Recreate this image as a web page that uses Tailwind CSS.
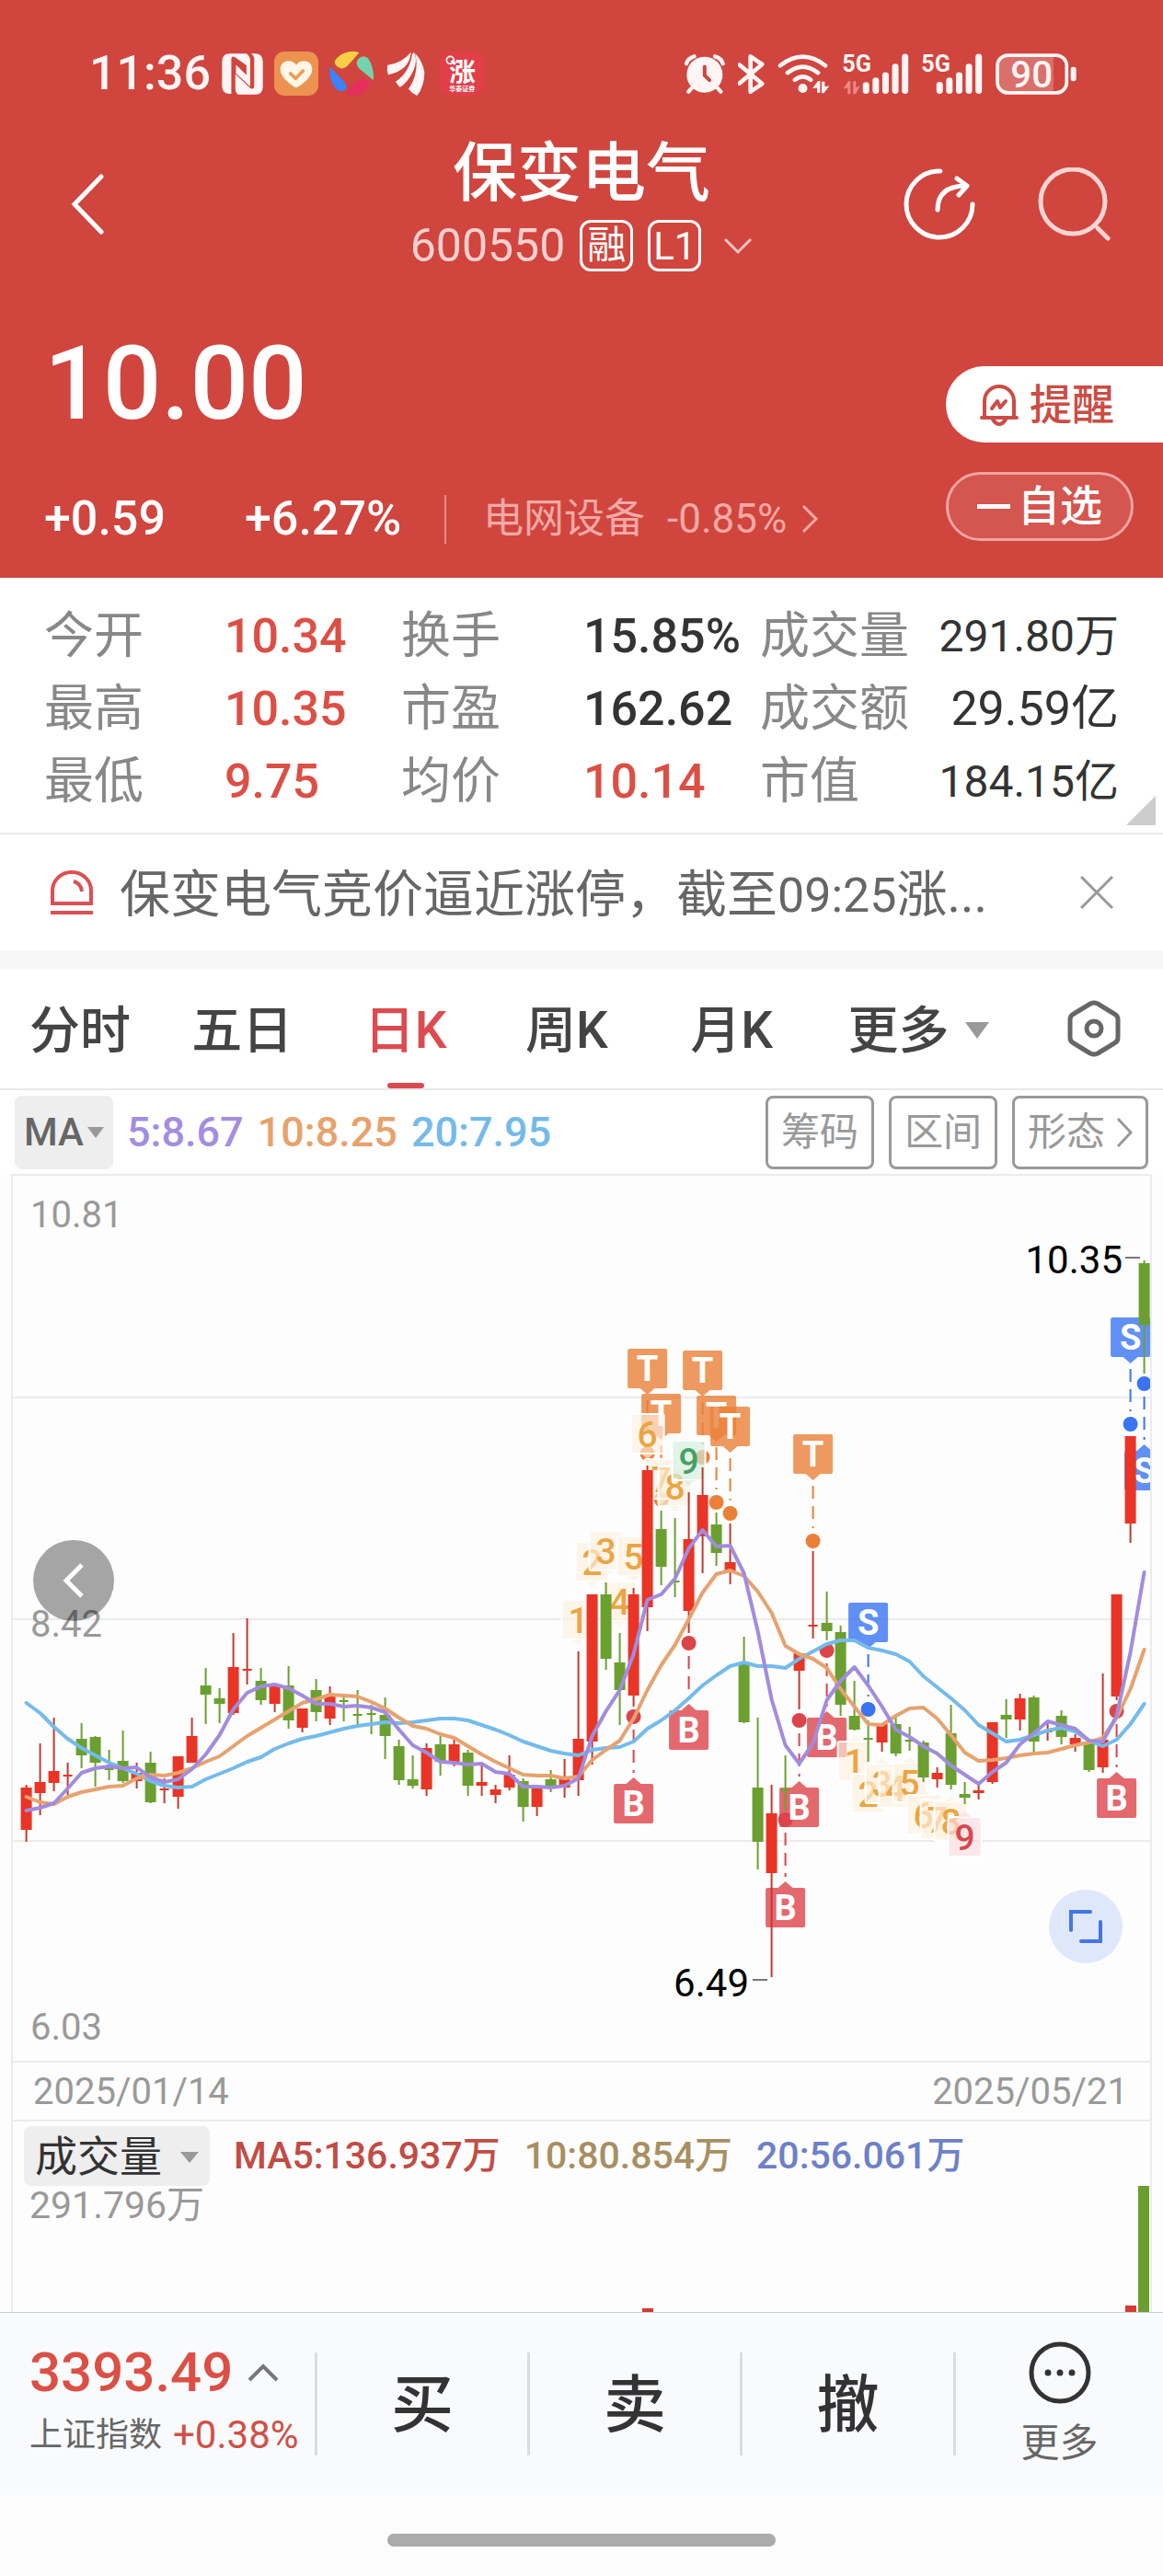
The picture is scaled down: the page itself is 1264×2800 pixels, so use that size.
<!DOCTYPE html>
<html lang="zh-CN">
<head>
    <meta charset="UTF-8">
    <meta name="viewport" content="width=device-width, initial-scale=1">
    <title>保变电气 600550</title>
    <script src="https://cdn.jsdelivr.net/npm/@tailwindcss/browser@4"></script>
</head>
<body class="bg-[#fcfcfc] text-[#333] font-['Roboto','Noto_Sans_CJK_SC',sans-serif]">

    <header class="bg-[#d0453e] text-white">
        <!-- status bar -->
        <div class="flex items-center justify-between pt-14 pl-[97px] pr-[94px] text-[#fff5f4]">
            <div class="flex items-center gap-3 h-12">
                <span class="text-[52px] leading-12 font-medium">11:36</span>
                <svg class="w-[45px] h-[45px]" viewBox="455 53 134 134">
                    <path fill="currentColor" d="M480 54h55q8 4 12 18v88l-46-42v-28l34 33V92L498 66q-12-8-12 8v110h-5q-25 0-25-26V80q0-26 24-26z"/>
                    <path fill="currentColor" d="M549 54h14q25 0 25 26v80q0 26-25 26h-55q-8-4-9-18v-48l49 46q10 6 12-6V70q-2-12-11-16z"/>
                </svg>
                <svg class="w-12 h-12" viewBox="0 0 144 144">
                    <rect width="144" height="144" rx="34" fill="#ec9350"/>
                    <path fill="#fff6e6" d="M72 44c14-22 52-16 52 14 0 26-32 48-45 57q-7 5-14 0C52 106 20 84 20 58c0-30 38-36 52-14z"/>
                    <path d="M53 72l17 16 24-25" fill="none" stroke="#ec9f58" stroke-width="11" stroke-linecap="round" stroke-linejoin="round"/>
                </svg>
                <svg class="w-12 h-12" viewBox="0 0 144 144">
                    <path fill="#fbcf45" d="M58 2Q80-4 97 4L58 48q-14 12-28 4-16-10-12-22Q32 8 58 2z"/>
                    <path fill="#73d3ad" d="M94 24q16-16 32-2 20 30 18 72L98 56q-16-16-4-32z"/>
                    <path fill="#3b82fb" d="M3 50l50 54q8 16-6 24-12 4-22-2Q-6 92 3 50z"/>
                    <path fill="#e62f5c" d="M54 140l34-44q12-12 30-6 16 8 12 22-26 40-76 28z"/>
                </svg>
                <svg class="w-12 h-12" viewBox="0 0 144 144" fill="currentColor">
                    <path d="M10 44q46-6 76-42-4 58-74 74-6-18-2-32zM36 98q46-32 54-90l6-6q16 34-12 78-16 26-34 36-8-8-14-18zM78 122q36-52 22-116 24 26 30 62 0 44-24 76-18-8-28-22z"/>
                </svg>
                <svg class="w-12 h-12 overflow-visible" viewBox="0 0 144 144">
                    <rect width="144" height="144" rx="34" fill="#e13f48"/>
                    <circle cx="34" cy="28" r="12" fill="none" stroke="#fff" stroke-width="5"/>
                    <text x="74" y="98" font-size="86" font-weight="700" text-anchor="middle" fill="#fff">涨</text>
                    <text x="73" y="130" font-size="21" font-weight="700" text-anchor="middle" fill="#fff">华泰证券</text>
                </svg>
            </div>
            <div class="flex items-center gap-[14px] h-12">
                <svg class="w-11 h-[43px]" viewBox="38 55 131 130">
                    <circle cx="103" cy="122" r="59" fill="currentColor"/>
                    <path d="M64 162l-14 16M142 162l14 16M43 86q4-18 26-24M163 86q-4-18-26-24" fill="none" stroke="currentColor" stroke-width="13" stroke-linecap="round"/>
                    <path d="M103 96v28l16 16" fill="none" stroke="#d0453e" stroke-width="12" stroke-linecap="round"/>
                </svg>
                <svg class="w-[29px] h-[43px]" viewBox="217 55 87 130">
                    <path d="M222 90l74 62-38 26V62l38 26-74 62" fill="none" stroke="currentColor" stroke-width="14" stroke-linejoin="round" stroke-linecap="round"/>
                </svg>
                <svg class="w-[57px] h-11" viewBox="350 50 170 133">
                    <path d="M358 90q74-58 148 0M382 114q50-40 100 0M406 137q26-20 52 0" fill="none" stroke="currentColor" stroke-width="14" stroke-linecap="round"/>
                    <circle cx="432" cy="165" r="15" fill="currentColor"/>
                    <path d="M464 165l18-24h7v38h-10v-16zM519 157l-18 24h-7v-38h10v16z" fill="currentColor"/>
                </svg>
                <svg class="w-[72px] h-[45px] overflow-visible" viewBox="553 50 217 135">
                    <text x="551" y="110" font-size="76" font-weight="700" fill="currentColor">5G</text>
                    <path d="M555 165l16-24h7v42h-9v-20zM610 157l-16 26h-7v-42h9v20z" fill="#e88a85"/>
                    <path d="M629 154v18M661 139v33M693 122v50M725 94v78M757 62v110" stroke="currentColor" stroke-width="21" stroke-linecap="round"/>
                </svg>
                <svg class="w-[66px] h-[45px] overflow-visible" viewBox="808 50 199 135">
                    <text x="806" y="110" font-size="76" font-weight="700" fill="currentColor">5G</text>
                    <path d="M866 154v18M898 139v33M930 122v50M962 94v78M994 62v110" stroke="currentColor" stroke-width="21" stroke-linecap="round"/>
                </svg>
                <svg class="w-[88px] h-[45px] overflow-visible" viewBox="1058 48 263 134">
                    <path d="M1090 56h156v120h-156q-24 0-24-26V82q0-26 24-26z" fill="#da706b"/>
                    <rect x="1064" y="54" width="225" height="122" rx="34" fill="none" stroke="currentColor" stroke-width="11"/>
                    <rect x="1302" y="92" width="18" height="46" rx="7" fill="currentColor"/>
                    <text x="1175" y="159" font-size="120" font-weight="500" text-anchor="middle" fill="currentColor">90</text>
                </svg>
            </div>
        </div>

        <!-- title -->
        <div class="grid grid-cols-[1fr_auto_1fr] items-center pt-[45px] px-14">
            <button aria-label="返回" class="justify-self-start pl-5">
                <svg class="w-10 h-[66px]" viewBox="0 0 40 66"><path d="M34 3L5 33l29 30" fill="none" stroke="#fff" stroke-width="5" stroke-linecap="round"/></svg>
            </button>
            <div>
                <h1 class="text-[70px] leading-[80px] font-medium text-center">保变电气</h1>
                <div class="flex items-center justify-center gap-4 mt-[10px] h-14">
                    <span class="text-[50px] leading-14 text-[#fbd0cf]">600550</span>
                    <span class="h-14 w-[58px] border-[3px] rounded-xl text-[42px] leading-[50px] text-center">融</span>
                    <span class="h-14 w-[58px] border-[3px] rounded-xl text-[42px] leading-[52px] text-center">L1</span>
                    <svg class="w-8 h-5 ml-2" viewBox="0 0 32 20"><path d="M2 3l14 14L30 3" fill="none" stroke="#f6c2bf" stroke-width="3"/></svg>
                </div>
            </div>
            <div class="flex items-center gap-[66px] justify-self-end">
                <button aria-label="分享">
                    <svg class="w-20 h-20" viewBox="0 0 80 80" fill="none" stroke="#fff" stroke-width="5" stroke-linecap="round" stroke-linejoin="round">
                        <path d="M40 4a36 36 0 1 0 35 36M37 46q0-26 31-26M58 12l11 8-9 10"/>
                    </svg>
                </button>
                <button aria-label="搜索">
                    <svg class="w-20 h-20" viewBox="0 0 80 80" fill="none" stroke="#ffd4d2" stroke-width="5" stroke-linecap="round">
                        <circle cx="38" cy="37" r="35"/><path d="M65 66l11 11"/>
                    </svg>
                </button>
            </div>
        </div>

        <!-- price -->
        <div class="flex justify-between items-start pt-[74px] pb-[33px]">
            <div>
                <div class="pl-12 text-[112px] leading-24 font-medium">10.00</div>
                <div class="flex items-center h-16 mt-[66px] pt-[2px] pl-12">
                    <span class="w-[218px] text-[52px] font-medium">+0.59</span>
                    <span class="w-[217px] text-[52px] font-medium">+6.27%</span>
                    <span class="w-[2px] h-[53px] bg-[#e48d88]"></span>
                    <a href="#" class="flex items-center ml-10 text-[44px] text-[#f3a9a5]">
                        <span>电网设备</span>
                        <span class="ml-6">-0.85%</span>
                        <svg class="w-5 h-8 ml-4" viewBox="0 0 20 32"><path d="M2 2l14 14L2 30" fill="none" stroke="currentColor" stroke-width="3"/></svg>
                    </a>
                </div>
            </div>
            <div class="flex flex-col gap-8 pt-[29px]">
                <button class="flex items-center h-[83px] pt-[2px] pl-[37px] bg-white text-[#cb4d45] rounded-l-full text-[46px] font-medium">
                    <svg class="w-[42px] h-[46px] mr-3" viewBox="0 0 42 46" fill="none" stroke="currentColor" stroke-width="4" stroke-linecap="round" stroke-linejoin="round">
                        <path d="M2 36h38M5 36V18a16 16 0 0 1 32 0v18M14 38q7 10 14 0M13 26l6-8 3 7 6-7"/>
                    </svg>
                    提醒
                </button>
                <button class="flex items-center h-[75px] mr-8 px-[31px] border-[3px] border-[#eda5a1] bg-[#d5554f] rounded-full text-[46px] font-medium">
                    <span class="w-[36px] h-[5px] bg-white mr-2"></span>自选
                </button>
            </div>
        </div>
    </header>

    <!-- quote summary -->
    <section class="relative bg-white border-b-2 border-[#ebebeb] pt-6 pb-4 px-12">
        <dl class="grid grid-cols-[196fr_192fr_198fr_192fr_390fr] auto-rows-[79px] items-center text-[52px]">
            <dt class="text-[54px] text-[#888]">今开</dt><dd class="text-[#dc4f45] font-medium">10.34</dd>
            <dt class="text-[54px] text-[#888]">换手</dt><dd class="font-medium">15.85%</dd>
            <div class="flex items-center justify-between"><dt class="text-[54px] text-[#888]">成交量</dt><dd class="text-[48px]">291.80万</dd></div>
            <dt class="text-[54px] text-[#888]">最高</dt><dd class="text-[#dc4f45] font-medium">10.35</dd>
            <dt class="text-[54px] text-[#888]">市盈</dt><dd class="font-medium">162.62</dd>
            <div class="flex items-center justify-between"><dt class="text-[54px] text-[#888]">成交额</dt><dd>29.59亿</dd></div>
            <dt class="text-[54px] text-[#888]">最低</dt><dd class="text-[#dc4f45] font-medium">9.75</dd>
            <dt class="text-[54px] text-[#888]">均价</dt><dd class="text-[#dc4f45] font-medium">10.14</dd>
            <div class="flex items-center justify-between"><dt class="text-[54px] text-[#888]">市值</dt><dd class="text-[48px]">184.15亿</dd></div>
        </dl>
        <svg class="absolute right-2 bottom-2 w-8 h-8" viewBox="0 0 32 32"><path d="M32 0v32H0z" fill="#ccc"/></svg>
    </section>

    <!-- notice -->
    <section class="flex items-center h-[126px] bg-white pl-[53px] pr-[54px]">
        <svg class="w-[50px] h-12 mr-[27px] shrink-0" viewBox="0 0 50 48" fill="none" stroke="#dc4f54" stroke-width="4">
            <path d="M4 36V22a21 20 0 0 1 42 0v14zM27 12q8 2 9 11M2 46h46"/>
        </svg>
        <p class="grow pt-1 text-[55px] text-[#666] whitespace-nowrap">保变电气竞价逼近涨停，截至<span class="text-[52px]">09:25</span>涨...</p>
        <button aria-label="关闭">
            <svg class="w-9 h-9" viewBox="0 0 36 36"><path d="M1 1l34 34M35 1L1 35" stroke="#999" stroke-width="3"/></svg>
        </button>
    </section>
    <div class="h-5 bg-[#f7f7f7]"></div>

    <!-- period tabs -->
    <nav class="grid grid-cols-[176fr_187fr_175fr_179fr_171fr_238fr_auto] items-center h-[132px] bg-white border-b-2 border-[#e8e8e8] pl-8 pr-[46px] text-[55px] text-[#444] font-medium">
        <button class="justify-self-start pt-1">分时</button>
        <button class="justify-self-start pt-1">五日</button>
        <button class="relative justify-self-start flex items-center h-[130px] pt-1 text-[#dc4b50]">日K<span class="absolute bottom-0 left-1/2 -ml-5 w-10 h-[6px] rounded-full bg-[#dc4b50]"></span></button>
        <button class="justify-self-start pt-1">周K</button>
        <button class="justify-self-start pt-1">月K</button>
        <button class="justify-self-start flex items-center pt-1">更多<svg class="w-7 h-[18px] ml-4" viewBox="0 0 28 18"><path d="M1 0h26L14 18z" fill="#999"/></svg></button>
        <button aria-label="设置">
            <svg class="w-[58px] h-[62px]" viewBox="0 0 58 62" fill="none" stroke="#666" stroke-width="5" stroke-linejoin="round">
                <path d="M25 4q4-2 8 0l18 11q4 2 4 6v20q0 4-4 6L33 58q-4 2-8 0L7 47q-4-2-4-6V21q0-4 4-6z"/><circle cx="29" cy="31" r="8"/>
            </svg>
        </button>
    </nav>

    <!-- moving averages -->
    <div class="flex items-center justify-between h-[91px] bg-white px-4">
        <div class="flex items-center gap-[15px] text-[45px] font-medium">
            <button class="flex items-center justify-center gap-1 w-[107px] h-20 rounded-lg bg-[#eee] text-[42px] text-[#666] font-medium">MA<svg class="w-[18px] h-3" viewBox="0 0 18 12"><path d="M0 0h18L9 12z" fill="#999"/></svg></button>
            <span class="text-[#a28ee0]">5:8.67</span>
            <span class="text-[#e7a26c]">10:8.25</span>
            <span class="text-[#74baea]">20:7.95</span>
        </div>
        <div class="flex gap-4 text-[42px] text-[#999]">
            <button class="w-[118px] h-20 border-[3px] border-[#999] rounded-lg">筹码</button>
            <button class="w-[118px] h-20 border-[3px] border-[#999] rounded-lg">区间</button>
            <button class="flex items-center justify-center gap-3 w-[148px] h-20 border-[3px] border-[#999] rounded-lg">形态<svg class="w-[18px] h-8" viewBox="0 0 18 32"><path d="M2 1l14 15L2 31" fill="none" stroke="#999" stroke-width="3"/></svg></button>
        </div>
    </div>

    <main class="px-3 bg-[#fdfdfd]">
        <div class="border-x-2 border-[#ebebeb]">
            <!-- k line -->
            <div class="relative border-y-2 border-[#ebebeb]">
                <svg id="kline" class="block w-full h-auto" viewBox="14 1278 1236 962"></svg>
                <button aria-label="更早" class="absolute left-[22px] top-[396px] w-[88px] h-[88px] rounded-full bg-black/35 flex items-center justify-center">
                    <svg class="w-6 h-10" viewBox="0 0 24 40"><path d="M21 3L4 20l17 17" fill="none" stroke="#fff" stroke-width="5"/></svg>
                </button>
                <button aria-label="全屏" class="absolute right-[30px] bottom-[106px] w-20 h-20 rounded-full bg-[#dfe8fb] flex items-center justify-center">
                    <svg class="w-9 h-9" viewBox="0 0 36 36"><path d="M23 2H2v20M34 13v21H13" fill="none" stroke="#4575e4" stroke-width="4" stroke-linecap="round"/></svg>
                </button>
            </div>
            <div class="flex items-center justify-between h-[62px] pt-[2px] pl-[22px] pr-6 text-[40px] text-[#999]">
                <span>2025/01/14</span>
                <span>2025/05/21</span>
            </div>
            <!-- volume -->
            <div class="relative h-[209px] border-t-2 border-[#ebebeb] pt-[5px]">
                <svg class="absolute left-0 bottom-0 w-full h-auto" viewBox="14 2376 1236 137">
                    <path d="M698 2509h12v4h-12zM1223 2506h12v7h-12z" fill="#d63a30"/>
                    <path d="M1237 2376h12v137h-12z" fill="#6a9f30"/>
                </svg>
                <div class="flex items-center gap-[26px] pl-3 text-[41px] font-medium">
                    <button class="flex items-center justify-center gap-5 w-[202px] h-[65px] pt-[2px] rounded-lg bg-[#eee] text-[46px] font-normal">成交量<svg class="w-[20px] h-3" viewBox="0 0 20 12"><path d="M0 0h20L10 12z" fill="#999"/></svg></button>
                    <span class="text-[#c24c45]">MA5:136.937万</span>
                    <span class="text-[#a88f62]">10:80.854万</span>
                    <span class="text-[#6d80c8]">20:56.061万</span>
                </div>
                <div class="pl-[18px] text-[41px] leading-[42px] text-[#999]">291.796万</div>
            </div>
        </div>
    </main>

    <!-- trade bar -->
    <footer class="grid grid-cols-[342fr_231fr_231fr_232fr_228fr] items-center h-[199px] bg-[#f9fafc] border-t border-[#ccc]">
        <div class="pl-8 pb-1">
            <div class="flex items-center gap-4 text-[60px] leading-[60px] text-[#dc4f45] font-medium">3393.49
                <svg class="w-[34px] h-5" viewBox="0 0 34 20"><path d="M2 18L17 3l15 15" fill="none" stroke="#777" stroke-width="4"/></svg>
            </div>
            <div class="flex items-center gap-3 mt-3 text-[42px] leading-[52px] text-[#cf5148]"><span class="text-[36px] text-[#666]">上证指数</span>+0.38%</div>
        </div>
        <button class="h-28 pt-1 border-l-[3px] border-[#dcdcde] text-[68px] font-medium">买</button>
        <button class="h-28 pt-1 border-l-[3px] border-[#dcdcde] text-[68px] font-medium">卖</button>
        <button class="h-28 pt-1 border-l-[3px] border-[#dcdcde] text-[68px] font-medium">撤</button>
        <button class="flex flex-col items-center justify-center gap-[18px] h-28 border-l-[3px] border-[#dcdcde] text-[42px] leading-[50px] text-[#666]">
            <svg class="w-[68px] h-[68px] shrink-0" viewBox="0 0 68 68"><circle cx="34" cy="34" r="31" fill="none" stroke="#333" stroke-width="5"/><path d="M21 34h0M34 34h0M47 34h0" stroke="#333" stroke-width="7" stroke-linecap="round"/></svg>
            更多
        </button>
    </footer>
    <div class="pt-[42px] pb-8 bg-[#fcfcfc]">
        <div class="w-1/3 h-[14px] mx-auto rounded-full bg-[#ababab]"></div>
    </div>

    <script>
        // [up?, high, body top, body bottom, low]
        const candles = [
            [1,1940,1943,1989,2002],[1,1895,1937,1949,1973],[1,1867,1925,1938,1947],[1,1916,1929,1931,1952],[0,1873,1890,1908,1922],
            [0,1887,1888,1916,1942],[0,1902,1922,1924,1935],[0,1881,1914,1936,1938],[1,1916,1927,1936,1944],[0,1904,1916,1959,1960],
            [1,1933,1944,1946,1960],[1,1909,1909,1953,1966],[1,1867,1887,1916,1916],[0,1813,1832,1842,1874],[0,1835,1846,1852,1873],
            [1,1775,1812,1862,1864],[1,1759,1814,1816,1831],[0,1813,1827,1848,1853],[1,1830,1833,1852,1861],[0,1811,1832,1870,1879],
            [1,1857,1857,1878,1883],[0,1825,1837,1861,1871],[1,1833,1844,1868,1875],[0,1843,1848,1850,1871],[0,1837,1863,1865,1874],
            [0,1853,1862,1864,1885],[0,1845,1864,1887,1912],[0,1891,1898,1935,1940],[0,1908,1934,1941,1944],[1,1895,1900,1945,1952],
            [0,1887,1896,1915,1930],[1,1888,1896,1915,1920],[0,1902,1905,1941,1952],[1,1919,1937,1941,1952],[1,1940,1945,1951,1960],
            [1,1908,1929,1943,1946],[0,1933,1936,1964,1980],[1,1942,1942,1964,1974],[0,1924,1934,1941,1948],[1,1912,1933,1943,1954],
            [1,1795,1890,1935,1952],[1,1733,1733,1893,1918],[0,1720,1733,1803,1815],[0,1775,1807,1837,1875],[1,1726,1733,1843,1855],
            [1,1593,1598,1747,1773],[0,1642,1662,1703,1723],[0,1650,1718,1720,1736],[1,1622,1673,1751,1775],[1,1595,1625,1670,1710],
            [0,1644,1657,1688,1702],[1,1656,1698,1709,1722],[0,1779,1808,1872,1873],[0,1867,1943,2002,2032],[1,1940,1971,2036,2149],
            [0,1908,1945,1947,1968],[1,1797,1797,1816,1858],[1,1686,1766,1768,1781],[0,1730,1764,1773,1783],[0,1767,1774,1853,1865],
            [0,1827,1865,1880,1881],[0,1870,1889,1891,1915],[1,1873,1874,1894,1904],[0,1867,1874,1906,1909],[0,1877,1891,1893,1903],
            [0,1892,1894,1932,1937],[1,1921,1927,1934,1943],[0,1853,1884,1940,1945],[0,1937,1950,1954,1961],[1,1938,1946,1949,1956],
            [1,1872,1872,1937,1939],[0,1847,1864,1869,1889],[1,1841,1846,1869,1881],[0,1843,1845,1893,1904],[1,1871,1881,1883,1892],
            [0,1859,1865,1888,1896],[1,1885,1889,1896,1904],[0,1894,1895,1924,1926],[1,1819,1891,1921,1927],[1,1733,1733,1844,1848],
            [1,1561,1561,1656,1677],[0,1370,1373,1440,1493]
        ];
        const ma20 = [1851,1862,1877,1890,1900,1908,1916,1922,1928,1936,1941,1943,1942,1934,1928,1922,1915,1910,1901,1895,1890,1887,1883,1879,1876,1874,1872,1873,1872,1870,1868,1868,1870,1875,1880,1886,1893,1898,1903,1906,1908,1902,1900,1899,1893,1879,1870,1859,1846,1832,1821,1811,1807,1811,1811,1813,1803,1795,1787,1783,1783,1791,1794,1798,1806,1822,1834,1846,1859,1875,1884,1893,1891,1886,1881,1878,1882,1892,1898,1891,1874,1852];
        const ma10 = [1953,1959,1961,1953,1948,1945,1942,1941,1933,1929,1930,1927,1922,1915,1909,1898,1887,1878,1869,1860,1851,1847,1842,1843,1844,1850,1857,1867,1876,1879,1885,1889,1898,1907,1915,1922,1929,1930,1930,1933,1931,1913,1902,1892,1868,1837,1810,1788,1760,1731,1711,1707,1713,1730,1753,1789,1798,1803,1813,1836,1855,1874,1875,1865,1857,1856,1868,1886,1905,1914,1913,1911,1908,1906,1905,1901,1897,1894,1889,1867,1836,1793];
        const ma5 = [1968,1965,1960,1944,1927,1922,1920,1922,1921,1932,1937,1934,1923,1907,1886,1858,1840,1833,1831,1835,1843,1852,1852,1855,1854,1856,1861,1880,1897,1905,1915,1916,1918,1917,1926,1928,1942,1942,1943,1941,1933,1887,1860,1837,1798,1739,1733,1716,1683,1663,1681,1680,1710,1773,1847,1897,1917,1895,1848,1827,1812,1832,1855,1880,1888,1898,1906,1919,1929,1939,1926,1916,1896,1884,1871,1875,1879,1892,1893,1865,1796,1709];

        // [letter, candle index, box top, dot y]
        const flags = [
            ["T",45,1466,1580],["T",46,1515,1630],["T",49,1468,1584],["T",50,1517,1633],["T",51,1529,1645],["T",57,1559,1675],
            ["B",44,1939,1866],["B",48,1859,1786],["B",55,2052,1978],["B",58,1867,1794],["B",56,1943,1870],["B",79,1933,1860],
            ["S",61,1742,1858],["S",80,1432,1548],["S",81,1577,1504]
        ];
        const flagColor = { T: "#ea8038", B: "#dc444a", S: "#3a74f2" };

        // [number, candle index, box top, points up?]
        const tags = [
            [1,40,1739,0],[2,41,1676,0],[3,42,1664,0],[4,43,1719,0],[5,44,1670,0],[6,45,1537,0],[7,46,1586,0],[8,47,1594,0],[9,48,1566,0],
            [1,60,1893,1],[2,61,1928,1],[3,62,1917,1],[4,63,1922,1],[5,64,1916,1],[6,65,1951,1],[7,66,1956,1],[8,67,1958,1],[9,68,1975,1]
        ];

        const X = i => 28.6 + i * 15;
        let out = "";

        [1519, 1760, 2001].forEach(y => out += `<path d="M14 ${y}h1238" stroke="#ebebeb" stroke-width="2"/>`);

        flags.forEach(([t, i, y, dot]) => {
            const x = X(i), c = flagColor[t], up = dot < y;
            const tip = up ? `M${x - 8} ${y}l8-7 8 7z` : `M${x - 8} ${y + 43}l8 7 8-7z`;
            out += `<path d="M${x} ${up ? dot + 14 : y + 56}V${up ? y - 12 : dot - 14}" stroke="${c}" stroke-width="2" stroke-dasharray="14 8"/>
                <circle cx="${x}" cy="${dot}" r="8" fill="${c}"/>
                <g fill="${c}" fill-opacity=".8"><rect x="${x - 21.5}" y="${y}" width="43" height="43" rx="2"/><path d="${tip}"/></g>
                <text x="${x}" y="${y + 35}" font-size="38" font-weight="700" text-anchor="middle" fill="#fff">${t}</text>`;
        });

        // later tags fade the ones they cover
        tags.forEach(([n, i, y, up]) => {
            const x = X(i);
            let bg = "#fdf1e1", fg = "#eba544";
            if (n == 9) { bg = up ? "#fadcdf" : "#d2efe0"; fg = up ? "#d9474d" : "#45a064"; }
            const tip = up ? `M${x - 7} ${y}l7-6 7 6z` : `M${x - 7} ${y + 43}l7 6 7-6z`;
            out += `<g fill="${bg}" fill-opacity=".65"><rect x="${x - 18}" y="${y}" width="36" height="43" rx="2" stroke="#fff" stroke-width="2"/><path d="${tip}"/></g>
                <text x="${x}" y="${y + 36}" font-size="39" font-weight="500" text-anchor="middle" fill="${fg}">${n}</text>`;
        });

        candles.forEach(([up, h, t, b, l], i) => {
            const c = up ? "#e93426" : "#6ba030", w = b - t < 3 ? 10 : 12;
            out += `<path d="M${X(i)} ${h}V${l}" stroke="${up ? "#c23a30" : "#6ba030"}" stroke-width="2"/>
                <rect x="${X(i) - w / 2}" y="${t}" width="${w}" height="${b - t}" fill="${c}"/>`;
        });

        [[ma20, "#74bbeb"], [ma10, "#e7a26f"], [ma5, "#a18cde"]].forEach(([ma, c]) => {
            out += `<polyline points="${ma.map((y, i) => X(i) + "," + y).join(" ")}" fill="none" stroke="${c}" stroke-width="4" stroke-linejoin="round" stroke-linecap="round"/>`;
        });

        out += `<g font-size="40" fill="#999">
                <text x="33" y="1334">10.81</text><text x="33" y="1779">8.42</text><text x="33" y="2217">6.03</text></g>
            <g font-size="42" fill="#000" text-anchor="end"><text x="1220" y="1384">10.35</text><text x="814" y="2170">6.49</text></g>
            <path d="M1223 1367h16M818 2152h16" stroke="#777" stroke-width="2"/>`;

        document.getElementById("kline").innerHTML = out;
    </script>
</body>
</html>
